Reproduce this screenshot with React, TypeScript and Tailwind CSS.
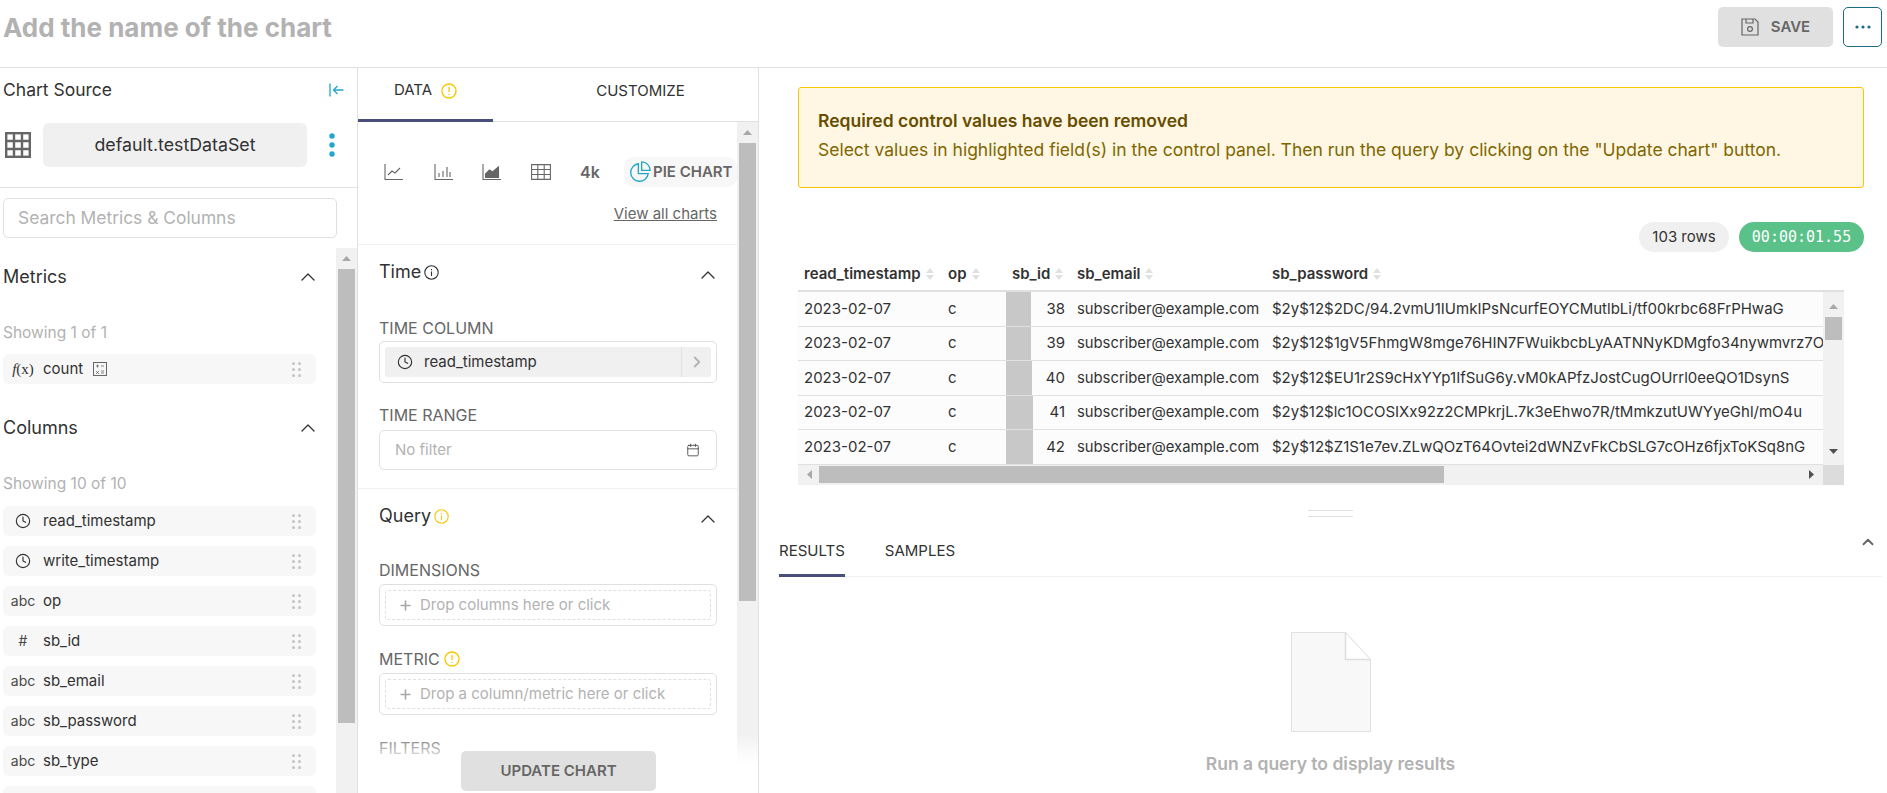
import { Calendar, ChevronRight, ChevronUp, Clock, Plus } from "lucide-react";
import type { ReactNode } from "react";

const rows = [
  { id: 38, bar: "w-[25px]", pw: "$2y$12$2DC/94.2vmU1IUmkIPsNcurfEOYCMutlbLi/tf00krbc68FrPHwaG" },
  { id: 39, bar: "w-[25px]", pw: "$2y$12$1gV5FhmgW8mge76HIN7FWuikbcbLyAATNNyKDMgfo34nywmvrz7O" },
  { id: 40, bar: "w-[26px]", pw: "$2y$12$EU1r2S9cHxYYp1IfSuG6y.vM0kAPfzJostCugOUrrl0eeQO1DsynS" },
  { id: 41, bar: "w-[27px]", pw: "$2y$12$lc1OCOSIXx92z2CMPkrjL.7k3eEhwo7R/tMmkzutUWYyeGhl/mO4u" },
  { id: 42, bar: "w-[27px]", pw: "$2y$12$Z1S1e7ev.ZLwQOzT64Ovtei2dWNZvFkCbSLG7cOHz6fjxToKSq8nG" },
];

const columns = [
  { icon: "clock", name: "read_timestamp" },
  { icon: "clock", name: "write_timestamp" },
  { icon: "abc", name: "op" },
  { icon: "#", name: "sb_id" },
  { icon: "abc", name: "sb_email" },
  { icon: "abc", name: "sb_password" },
  { icon: "abc", name: "sb_type" },
  { icon: "", name: "" },
];

function DragDots() {
  return (
    <svg width="9" height="15" viewBox="0 0 9 15" className="shrink-0 fill-[#c4c4c4]">
      {[1.5, 7.5, 13.5].map((y) => (
        <g key={y}>
          <circle cx="1.5" cy={y} r="1.5" />
          <circle cx="7.5" cy={y} r="1.5" />
        </g>
      ))}
    </svg>
  );
}

function SortIcon() {
  return (
    <svg width="8" height="12" viewBox="0 0 8 12" className="ml-[5px] shrink-0 fill-[#e0e0e0]">
      <path d="M4 0 8 5H0zM0 7h8l-4 5z" />
    </svg>
  );
}

function Warn({ size = 16 }: { size?: number }) {
  return (
    <svg width={size} height={size} viewBox="0 0 15 15" fill="none" className="shrink-0">
      <circle cx="7.5" cy="7.5" r="6.6" stroke="#fbc700" strokeWidth="1.3" />
      <path d="M7.5 3.8v4.6M7.5 10.2v1" stroke="#fbc700" strokeWidth="1.2" />
    </svg>
  );
}

function Track({ axis, children }: { axis: "x" | "y"; children?: ReactNode }) {
  return (
    <div className={axis === "y" ? "flex w-[21px] shrink-0 flex-col items-center bg-[#f1f1f1]" : "flex h-[20px] items-center bg-[#f1f1f1]"}>
      {children}
    </div>
  );
}

function FieldRow({ icon, name }: { icon: string; name: string }) {
  return (
    <div className="mb-[10px] flex h-[30px] w-[313px] items-center rounded-md bg-[#f7f7f7] pl-[9px] pr-[15px] text-[15px] text-[#323232]">
      <span className="flex w-[22px] shrink-0 justify-center text-sm text-[#484848]">
        {icon === "clock" ? <Clock size={16} strokeWidth={1.7} className="text-[#323232]" /> : icon}
      </span>
      <span className="ml-[9px] flex-1 truncate">{name}</span>
      <DragDots />
    </div>
  );
}

function SectionHead({ children, inset = "-mr-[3px]", chevronClass = "translate-y-[3px]" }: { children: ReactNode; inset?: string; chevronClass?: string }) {
  return (
    <div className={`flex h-[24px] items-center justify-between text-lg leading-[24px] text-[#323232] ${inset}`}>
      <div className="flex items-center gap-[3px]">{children}</div>
      <ChevronUp size={24} strokeWidth={1.3} className={chevronClass} />
    </div>
  );
}

function Label({ children }: { children: ReactNode }) {
  return <div className="flex h-[17px] items-center gap-1 text-base text-[#666666]">{children}</div>;
}

function DropControl({ text }: { text: string }) {
  return (
    <div className="mt-[6px] h-[42px] rounded-[5px] border border-[#e0e0e0] p-[5px]">
      <div className="flex h-[30px] items-center rounded-[3px] border border-dashed border-[#e0e0e0] pl-[12px] text-[15px] text-[#b2b2b2]">
        <Plus size={15} strokeWidth={2.6} className="mr-[7px] text-[#a8a8a8]" />
        {text}
      </div>
    </div>
  );
}

function ChartIcon({ children }: { children: ReactNode }) {
  return (
    <svg width="20" height="18" viewBox="0 0 20 18" fill="none" stroke="#666666" strokeWidth="1.1" className="shrink-0">
      {children}
    </svg>
  );
}

export default function App() {
  return (
    <div className="flex h-[793px] w-[1887px] flex-col overflow-hidden bg-white font-['Inter',sans-serif] text-[#323232]">
      <header className="flex h-[68px] shrink-0 items-start justify-between border-b border-[#e0e0e0] pl-[3px] pr-[5px]">
        <h1 className="mt-[11px] text-[26px] leading-[34px] font-bold text-[#b2b2b2]">Add the name of the chart</h1>
        <div className="mt-[7px] flex gap-[10px]">
          <button className="flex h-[40px] w-[115px] items-center justify-center gap-[12px] rounded-[5px] bg-[#e0e0e0] text-[15px] font-semibold text-[#666666]">
            <svg width="18" height="18" viewBox="0 0 18 18" fill="none" stroke="#666666" strokeWidth="1.2">
              <path d="M1 1h13l3 3v13H1z" />
              <path d="M5 1v4h7V1" />
              <circle cx="9" cy="11" r="2.4" />
            </svg>
            SAVE
          </button>
          <button className="flex h-[40px] w-[39px] items-center justify-center rounded-[5px] border border-[#1a6d85]">
            <svg width="16" height="4" viewBox="0 0 16 4" className="fill-[#1a6d85]">
              <circle cx="2" cy="2" r="1.6" />
              <circle cx="8" cy="2" r="1.6" />
              <circle cx="14" cy="2" r="1.6" />
            </svg>
          </button>
        </div>
      </header>

      <main className="flex min-h-0 flex-1">
        {/* dataset + columns */}
        <aside className="flex w-[358px] shrink-0 flex-col border-r border-[#e0e0e0]">
          <div className="h-[120px] shrink-0 border-b border-[#e0e0e0]">
            <div className="flex h-[44px] items-center justify-between pl-[3px] pr-[13px] text-[17.5px]">
              Chart Source
              <svg width="15" height="14" viewBox="0 0 15 14" fill="none" stroke="#20a7c9" strokeWidth="1.3">
                <path d="M1 0.5v13M14.5 7H4.5M8.5 3 4.5 7l4 4" />
              </svg>
            </div>
            <div className="mt-[11px] flex items-center pl-[5px]">
              <svg width="26" height="26" viewBox="0 0 26 26" fill="none" stroke="#666666" strokeWidth="2.4" className="shrink-0">
                <rect x="1.2" y="1.2" width="23.6" height="23.6" />
                <path d="M1 9h24M1 17h24M9 1v24M17 1v24" />
              </svg>
              <div className="ml-[12px] flex h-[44px] w-[264px] items-center justify-center rounded-md bg-[#f0f0f0] text-[17.8px]">default.testDataSet</div>
              <svg width="6" height="24" viewBox="0 0 6 24" className="ml-[22px] fill-[#20a7c9]">
                <circle cx="3" cy="3" r="2.7" />
                <circle cx="3" cy="12" r="2.7" />
                <circle cx="3" cy="21" r="2.7" />
              </svg>
            </div>
          </div>
          <div className="shrink-0 px-[3px] pt-[10px]">
            <div className="flex h-[40px] w-[334px] items-center rounded-[5px] border border-[#e0e0e0] pl-[14px] pt-[1px] text-[17.4px] text-[#b2b2b2]">Search Metrics &amp; Columns</div>
          </div>
          <div className="mt-[10px] flex min-h-0 flex-1">
            <div className="min-w-0 flex-1 overflow-hidden pl-[3px] pt-[17px]">
              <SectionHead inset="pr-[16px]" chevronClass="">Metrics</SectionHead>
              <div className="mt-[34px] text-[15.5px] leading-[20px] text-[#b2b2b2]">Showing 1 of 1</div>
              <div className="mt-[11px] flex h-[30px] w-[313px] items-center rounded-md bg-[#f7f7f7] pl-[9px] pr-[15px] text-[15px]">
                <span className="flex w-[22px] justify-center font-['Liberation_Serif',serif] text-[15px]">
                  <i>f</i>(x)
                </span>
                <span className="ml-[9px]">count</span>
                <svg width="14" height="14" viewBox="0 0 14 14" fill="none" stroke="#666666" className="ml-[10px]">
                  <rect x="0.5" y="0.5" width="13" height="13" />
                  <path d="M3 4h3M4.5 2.5v3M8 4h3M8 9h3M8 11h3M3 9l3 3M6 9l-3 3" strokeWidth="0.8" />
                </svg>
                <span className="flex-1" />
                <DragDots />
              </div>
              <div className="mt-[32px]">
                <SectionHead inset="pr-[16px]" chevronClass="">Columns</SectionHead>
              </div>
              <div className="mb-[12px] mt-[34px] text-[15.5px] leading-[20px] text-[#b2b2b2]">Showing 10 of 10</div>
              {columns.map((c, i) => (
                <FieldRow key={i} icon={c.icon} name={c.name} />
              ))}
            </div>
            <Track axis="y">
              <svg width="9" height="5" viewBox="0 0 9 5" className="my-[8px] fill-[#a8a8a8]">
                <path d="M4.5 0 9 5H0z" />
              </svg>
              <div className="h-[454px] w-[17px] bg-[#bdbdbd]" />
            </Track>
          </div>
        </aside>

        {/* controls */}
        <section className="relative flex w-[401px] shrink-0 flex-col border-r border-[#e0e0e0]">
          <div className="flex h-[54px] shrink-0 border-b border-[#e0e0e0] text-[15px]">
            <div className="-mb-px flex w-[135px] items-center justify-center gap-[9px] border-b-[3px] border-[#484f7d] pb-[6px]">
              DATA <Warn />
            </div>
            <div className="flex flex-1 items-center justify-center pb-[6px] pl-[30px]">CUSTOMIZE</div>
          </div>
          <div className="flex min-h-0 flex-1">
            <div className="min-w-0 flex-1 overflow-hidden">
              <div className="h-[123px] border-b border-[#f0f0f0]">
                <div className="flex items-center pl-[26px] pt-[35px]">
                  <div className="flex w-[50px] shrink-0">
                    <ChartIcon>
                      <path d="M1 1v15.5h18M4 12l4-4 3 2 5-5" />
                    </ChartIcon>
                  </div>
                  <div className="flex w-[48px] shrink-0">
                    <ChartIcon>
                      <path d="M1 1v15.5h18M5 14v-4M9 14V8M13 14V4M16 14V9" />
                    </ChartIcon>
                  </div>
                  <div className="flex w-[49px] shrink-0">
                    <ChartIcon>
                      <path d="M1 1v15.5h18" />
                      <path d="M3.5 14.5V11l4-4 3 2 6-5v10.5z" fill="#666666" />
                    </ChartIcon>
                  </div>
                  <div className="flex w-[49px] shrink-0">
                    <ChartIcon>
                      <path d="M.6 1.6h18.8v14.8H.6zM.6 6.5h18.8M.6 11.5h18.8M6.8 1.6v14.8M13.2 1.6v14.8" />
                    </ChartIcon>
                  </div>
                  <div className="flex w-[44px] shrink-0 text-base font-semibold text-[#666666]">4k</div>
                  <div className="flex h-[30px] flex-1 items-center gap-[2px] rounded-[10px] bg-[#f7f7f7] pl-[5px] text-[15px] font-semibold whitespace-nowrap text-[#666666]">
                    <svg width="22" height="22" viewBox="0 0 20 20" fill="none" stroke="#20a7c9" strokeWidth="1.2" className="shrink-0">
                      <path d="M8.5 2.5a8 8 0 1 0 9 9h-9z" />
                      <path d="M11.5 .8v7.7h7.7a7.7 7.7 0 0 0-7.7-7.7z" />
                    </svg>
                    PIE CHART
                  </div>
                </div>
                <div className="mt-[17px] pr-[20px] text-right text-[15px] leading-[20px] text-[#666666] underline">View all charts</div>
              </div>

              <div className="h-[244px] border-b border-[#f0f0f0] pl-[21px] pr-[20px] pt-[15px]">
                <SectionHead>
                  Time
                  <svg width="15" height="15" viewBox="0 0 15 15" fill="none" stroke="#323232" strokeWidth="1.1">
                    <circle cx="7.5" cy="7.5" r="6.7" />
                    <path d="M7.5 6.5v4.5M7.5 4v1.2" />
                  </svg>
                </SectionHead>
                <div className="mt-[35px]">
                  <Label>TIME COLUMN</Label>
                </div>
                <div className="mt-[5px] h-[42px] rounded-[5px] border border-[#e0e0e0] p-[5px]">
                  <div className="flex h-[30px] items-center rounded-[3px] bg-[#f0f0f0] text-[15px]">
                    <Clock size={16} strokeWidth={1.7} className="ml-[12px] mr-[11px]" />
                    <span className="flex-1">read_timestamp</span>
                    <div className="flex h-full w-[30px] items-center justify-center border-l border-[#e0e0e0]">
                      <ChevronRight size={18} strokeWidth={2.4} className="text-[#b2b2b2]" />
                    </div>
                  </div>
                </div>
                <div className="mt-[23px]">
                  <Label>TIME RANGE</Label>
                </div>
                <div className="mt-[7px] flex h-[40px] items-center justify-between rounded-[5px] border border-[#e0e0e0] pl-[15px] pr-[16px] text-[15px] text-[#b2b2b2]">
                  No filter
                  <Calendar size={14} strokeWidth={1.5} className="text-[#484848]" />
                </div>
              </div>

              <div className="pl-[21px] pr-[20px] pt-[15px]">
                <SectionHead>
                  Query
                  <svg width="15" height="15" viewBox="0 0 15 15" fill="none" stroke="#fbc700" strokeWidth="1.1">
                    <circle cx="7.5" cy="7.5" r="6.7" />
                    <path d="M7.5 6.5v4.5M7.5 4v1.2" />
                  </svg>
                </SectionHead>
                <div className="mt-[33px]">
                  <Label>DIMENSIONS</Label>
                </div>
                <DropControl text="Drop columns here or click" />
                <div className="mt-[24px]">
                  <Label>
                    METRIC <Warn />
                  </Label>
                </div>
                <DropControl text="Drop a column/metric here or click" />
                <div className="mt-[24px]">
                  <Label>FILTERS</Label>
                </div>
              </div>
            </div>
            <Track axis="y">
              <svg width="9" height="5" viewBox="0 0 9 5" className="my-[8px] fill-[#a8a8a8]">
                <path d="M4.5 0 9 5H0z" />
              </svg>
              <div className="h-[458px] w-[17px] bg-[#bdbdbd]" />
            </Track>
          </div>
          {/* fade under the sticky button */}
          <div className="absolute inset-x-0 bottom-0 h-[60px] bg-gradient-to-b from-white/0 via-white to-white" />
          <button className="absolute bottom-[2px] left-[103px] h-[40px] w-[195px] rounded-[5px] bg-[#e0e0e0] text-[15px] font-semibold text-[#666666]">UPDATE CHART</button>
        </section>

        {/* chart area */}
        <div className="min-w-0 flex-1 pl-[20px] pr-[5px]">
          <div className="pl-[19px] pr-[18px] pt-[19px]">
            <div className="flex h-[101px] flex-col justify-center gap-[7px] rounded-[3px] border border-[#fbc700] bg-[#fff7e3] pl-[19px] pb-[4px]">
              <div className="text-[17.5px] leading-[22px] font-semibold text-[#664d00]">Required control values have been removed</div>
              <div className="text-[17.5px] leading-[22px] text-[#806600]">Select values in highlighted field(s) in the control panel. Then run the query by clicking on the "Update chart" button.</div>
            </div>
            <div className="mt-[34px] flex justify-end gap-[10px]">
              <div className="flex h-[30px] w-[90px] items-center justify-center rounded-full bg-[#f0f0f0] text-[15px]">103 rows</div>
              <div className="flex h-[30px] w-[125px] items-center justify-center rounded-full bg-[#5ac189] font-['DejaVu_Sans_Mono',monospace] text-[15px] text-white">00:00:01.55</div>
            </div>

            <div className="mt-[11px] w-[1046px]">
              <div className="flex h-[27px] items-start text-[15px] font-semibold">
                <div className="flex w-[144px] items-center pl-[6px]">read_timestamp<SortIcon /></div>
                <div className="flex w-[64px] items-center pl-[6px]">op<SortIcon /></div>
                <div className="flex w-[65px] items-center pl-[6px]">sb_id<SortIcon /></div>
                <div className="flex w-[195px] items-center pl-[6px]">sb_email<SortIcon /></div>
                <div className="flex items-center pl-[6px]">sb_password<SortIcon /></div>
              </div>
              <div className="flex border-t-2 border-[#e0e0e0]">
                <div className="min-w-0 flex-1 overflow-hidden">
                  {rows.map((r) => (
                    <div key={r.id} className="flex h-[34.6px] items-stretch border-b border-[#e0e0e0] bg-[#fcfcfc] text-[15px] whitespace-nowrap">
                      <div className="flex w-[144px] shrink-0 items-center pl-[6px]">2023-02-07</div>
                      <div className="flex w-[64px] shrink-0 items-center pl-[6px]">c</div>
                      <div className="relative flex w-[65px] shrink-0 items-center justify-end pr-[6px]">
                        <div className={`absolute inset-y-0 left-0 bg-[#c8c8c8] ${r.bar}`} />
                        <span className="relative">{r.id}</span>
                      </div>
                      <div className="flex w-[195px] shrink-0 items-center pl-[6px] text-[14.8px]">subscriber@example.com</div>
                      <div className="flex shrink-0 items-center pl-[6px]">{r.pw}</div>
                    </div>
                  ))}
                </div>
                <Track axis="y">
                  <svg width="9" height="5" viewBox="0 0 9 5" className="mb-[8px] mt-[12px] fill-[#a8a8a8]">
                    <path d="M4.5 0 9 5H0z" />
                  </svg>
                  <div className="h-[23px] w-[17px] bg-[#bdbdbd]" />
                  <div className="flex-1" />
                  <svg width="9" height="5" viewBox="0 0 9 5" className="mb-[11px] fill-[#505050]">
                    <path d="M0 0h9L4.5 5z" />
                  </svg>
                </Track>
              </div>
              <div className="flex">
                <div className="flex-1">
                  <Track axis="x">
                    <svg width="5" height="9" viewBox="0 0 5 9" className="ml-[9px] mr-[7px] fill-[#a8a8a8]">
                      <path d="M5 0v9L0 4.5z" />
                    </svg>
                    <div className="h-[17px] w-[625px] bg-[#bdbdbd]" />
                    <div className="flex-1" />
                    <svg width="5" height="9" viewBox="0 0 5 9" className="mr-[9px] fill-[#505050]">
                      <path d="M0 0v9l5-4.5z" />
                    </svg>
                  </Track>
                </div>
                <div className="h-[20px] w-[21px] bg-[#dcdcdc]" />
              </div>
            </div>
          </div>

          <div className="mx-auto mt-[25px] h-[7px] w-[45px] border-y border-[#e0e0e0]" />

          <div className="relative mt-[19px] flex h-[41px] border-b border-[#f0f0f0] text-[15px]">
            <div className="-mb-px flex h-[41px] items-start border-b-[3px] border-[#484f7d] pt-[4px]">RESULTS</div>
            <div className="ml-[40px] pt-[4px]">SAMPLES</div>
            <ChevronUp size={18} strokeWidth={2.4} className="absolute -top-[3px] right-[5px] text-[#666666]" />
          </div>

          <div className="flex flex-col items-center pt-[55px]">
            <svg width="80" height="100" viewBox="0 0 80 100" fill="none">
              <path d="M.5.5h54l25 27v72H.5z" fill="#f8f8f8" stroke="#e0e0e0" />
              <path d="M54.5.5v27h25z" fill="#ffffff" />
              <path d="M54.5.5l25 27" stroke="#e0e0e0" />
              <path d="M54.5.5v27h25" stroke="#dedede" strokeWidth="1.5" />
            </svg>
            <div className="mt-[19px] text-[17.5px] font-semibold text-[#b2b2b2]">Run a query to display results</div>
          </div>
        </div>
      </main>
    </div>
  );
}
